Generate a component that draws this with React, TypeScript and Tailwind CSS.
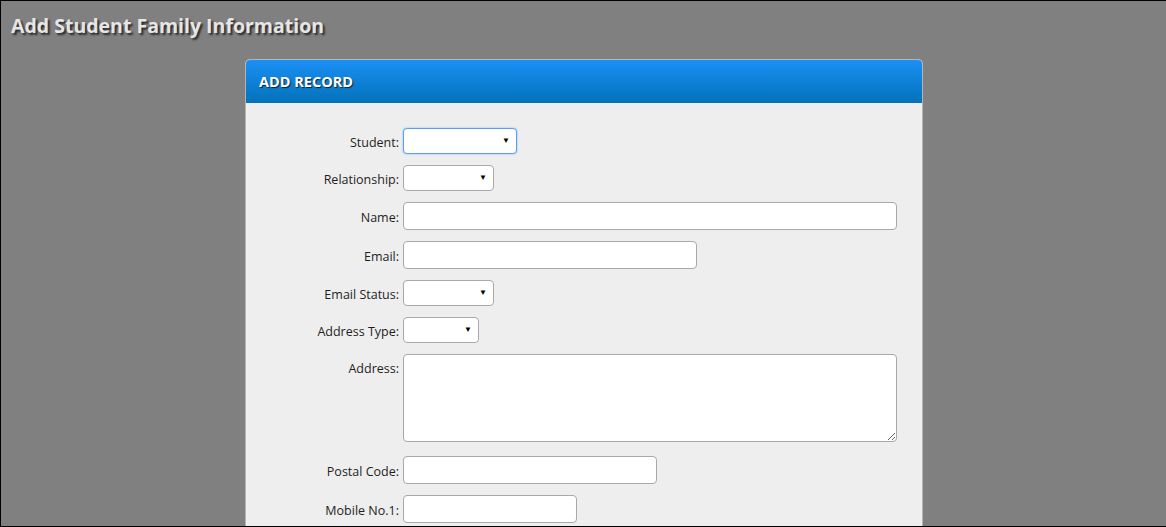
import React from 'react'

const font = { fontFamily: '"Open Sans", "Noto Sans", sans-serif' }

function Row({ label, top = false, children }: { label: string; top?: boolean; children: React.ReactNode }) {
    return (
        <div className={`flex ${top ? 'items-start' : 'items-center'}`}>
            <label className={`w-[157px] pr-[4px] text-right text-[12.5px] text-[#1e1e1e] ${top ? 'pt-[6px]' : 'translate-y-[2px]'}`}>{label}</label>
            {children}
        </div>
    )
}

function Select({ width, focused = false }: { width: string; focused?: boolean }) {
    return (
        <div className={`relative h-[26px] ${width}`}>
            <select
                className={`h-full w-full appearance-none rounded-[4px] bg-white outline-none ${focused ? 'border border-[#5b9df5] shadow-[0_0_2px_#7ab2f7]' : 'border border-[#a9a9a9]'}`}
            />
            <span className="pointer-events-none absolute right-[7px] top-[8px] text-[8px] leading-none text-black">▼</span>
        </div>
    )
}

function Input({ width }: { width: string }) {
    return <input type="text" className={`h-[28px] ${width} rounded-[4px] border border-[#a9a9a9] bg-white px-2 outline-none`} />
}

export default function App() {
    return (
        <div style={font} className="h-[527px] overflow-hidden bg-[#808080] border-t border-l border-b border-black">
            <h1 className="pl-[10px] pt-[11px] text-[19.5px] font-bold leading-[28px] text-[#e6e6e6] [text-shadow:2px_2px_2px_#2a2a2a]">
                Add Student Family Information
            </h1>

            <div className="ml-[244px] mt-[19px] w-[678px] rounded-t-[5px] border border-[#b5b5b5] border-b-0 bg-[#eeeeee]">
                <div className="flex h-[43px] items-center rounded-t-[4px] bg-gradient-to-b from-[#1a90f6] to-[#0272b9] px-[13px]">
                    <span className="text-[14.5px] font-bold text-white [text-shadow:1px_1px_1px_#123]">ADD RECORD</span>
                </div>

                <div className="flex flex-col gap-[11px] pt-[25px] pb-[20px]">
                    <Row label="Student:"><Select width="w-[114px]" focused /></Row>
                    <Row label="Relationship:"><Select width="w-[91px]" /></Row>
                    <Row label="Name:"><Input width="w-[494px]" /></Row>
                    <Row label="Email:"><Input width="w-[294px]" /></Row>
                    <Row label="Email Status:"><Select width="w-[91px]" /></Row>
                    <Row label="Address Type:"><Select width="w-[76px]" /></Row>
                    <Row label="Address:" top>
                        <textarea className="block h-[88px] w-[494px] rounded-[4px] border border-[#a9a9a9] bg-white outline-none" />
                    </Row>
                    <div className="mt-[3px]">
                        <Row label="Postal Code:"><Input width="w-[254px]" /></Row>
                    </div>
                    <Row label="Mobile No.1:"><Input width="w-[174px]" /></Row>
                </div>
            </div>
        </div>
    )
}
